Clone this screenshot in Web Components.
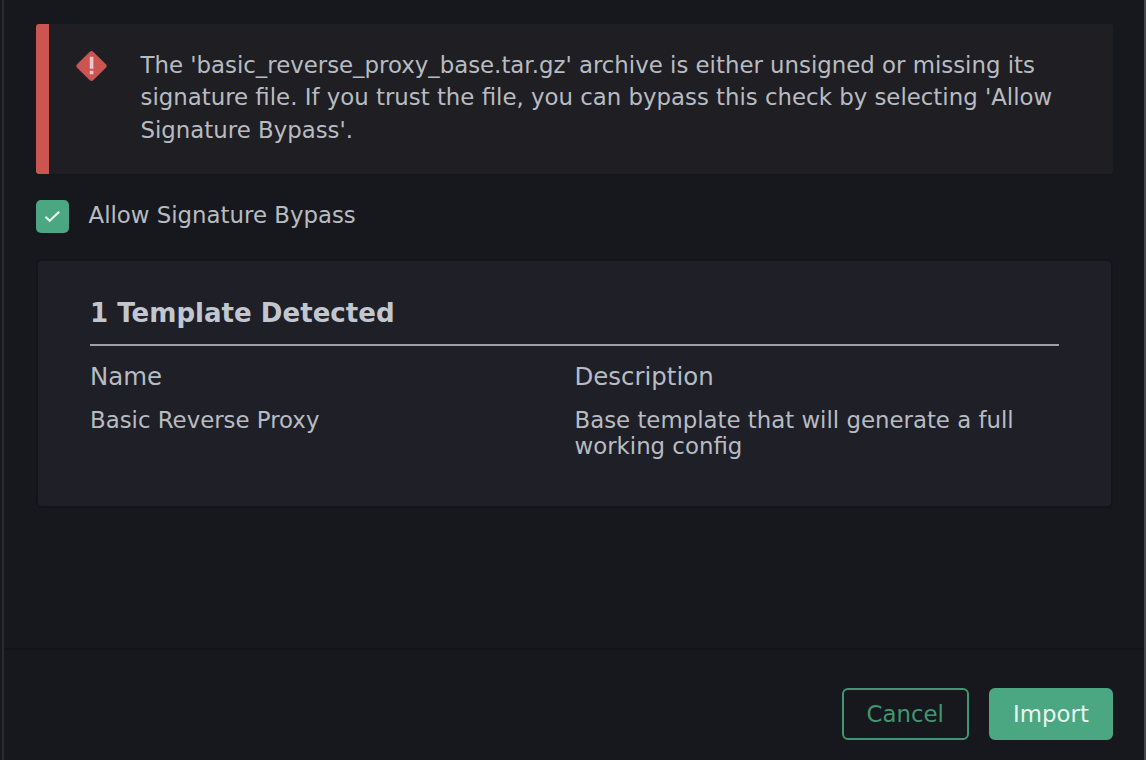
<!DOCTYPE html>
<html lang="en">
<head>
<meta charset="utf-8">
<title>Import Template</title>
<style>
html,body{margin:0;height:100%;background:#17181d}
body{font-family:"DejaVu Sans",sans-serif;color:#b7bcc2;font-size:22.85px;overflow:hidden}
</style>
</head>
<body>
<import-dialog>
  <alert-banner>The 'basic_reverse_proxy_base.tar.gz' archive is either unsigned or missing its signature file. If you trust the file, you can bypass this check by selecting 'Allow Signature Bypass'.</alert-banner>
  <check-box>Allow Signature Bypass</check-box>
  <template-card>
    <span slot="title">1 Template Detected</span>
    <span slot="name">Basic Reverse Proxy</span>
    <span slot="description">Base template that will generate a full working config</span>
  </template-card>
  <action-button slot="footer">Cancel</action-button>
  <action-button slot="footer" primary>Import</action-button>
</import-dialog>
<script>
const define = (name, html) => customElements.define(name, class extends HTMLElement {
  constructor() {
    super();
    const t = document.createElement('template');
    t.innerHTML = html;
    this.attachShadow({ mode: 'open' }).append(t.content.cloneNode(true));
  }
});

define('import-dialog', `
<style>
:host{display:flex;flex-direction:column;box-sizing:border-box;width:1146px;height:760px;background:#17181d;border-left:2px solid #17181d;border-right:2px solid #47474a;box-shadow:inset 2px 0 #2b2c31}
main{flex:1;padding:23.5px 31px 0 34px;display:flex;flex-direction:column}
footer{box-sizing:border-box;height:112px;margin-left:2px;border-top:2px solid #141519;padding:37.5px 31px 20px;display:flex;justify-content:flex-end;gap:20px}
</style>
<main><slot></slot></main>
<footer><slot name="footer"></slot></footer>`);

define('alert-banner', `
<style>
:host{display:flex;box-sizing:border-box;width:1077px;height:150px;background:#1f1e23;border-left:13px solid #cb5651;border-radius:3px;padding:25px 40px 0 26.5px}
svg{flex:none;width:32px;height:32px;margin-top:1.5px}
p{margin:0 0 0 33px;line-height:32.5px}
</style>
<svg viewBox="0 0 32 32"><path d="M13.8 1.7Q15.5 .1 17.2 1.7L29.9 14.3Q31.5 16 29.9 17.7L17.2 30.3Q15.5 31.9 13.8 30.3L1.1 17.7Q-.5 16 1.1 14.3Z" fill="#cb5651"/><path d="M13.8 6.7h3.6v12.1h-3.6zM13.8 20.8h3.6v3.5h-3.6z" fill="#e8c8cb"/></svg>
<p><slot></slot></p>`);

define('check-box', `
<style>
:host{display:flex;align-items:center;gap:19.5px;margin-top:26px;height:33px}
span{width:33px;height:33px;border-radius:5px;background:#4ba682;display:flex}
b{font-weight:400;line-height:32px;margin-top:-3px}
</style>
<span><svg width="33" height="33" viewBox="0 0 33 33"><path d="M9.4 16.8l4.3 4L23.2 11.8" fill="none" stroke="#e4f6ef" stroke-width="2.2"/></svg></span><b><slot></slot></b>`);

define('template-card', `
<style>
:host{display:block;box-sizing:border-box;width:1077px;height:249px;margin-top:26px;background:#1f1f27;border:2px solid #141519;border-radius:6px;padding:36.5px 52px 0}
h2{margin:0;font-size:26.08px;line-height:32px;height:49px;box-sizing:border-box;border-bottom:2px solid #a0a0a2;color:#c2c7cf}
.grid{display:grid;grid-template-columns:1fr 1fr;line-height:26px}
.head{font-size:24.45px;line-height:32px;padding:15px 0 14px}
</style>
<h2><slot name="title"></slot></h2>
<div class="grid"><div class="head">Name</div><div class="head">Description</div>
<div><slot name="name"></slot></div><div><slot name="description"></slot></div></div>`);

define('action-button', `
<style>
:host{display:block}
button{font:inherit;box-sizing:border-box;width:127.5px;height:52.4px;padding:0;border:2px solid #429573;border-radius:6px;background:none;color:#42966f;line-height:49px;display:block}
:host([primary]) button{width:124px;background:#4ba682;border-color:#4ba682;color:#e6f6f0}
</style>
<button><slot></slot></button>`);
</script>
</body>
</html>
